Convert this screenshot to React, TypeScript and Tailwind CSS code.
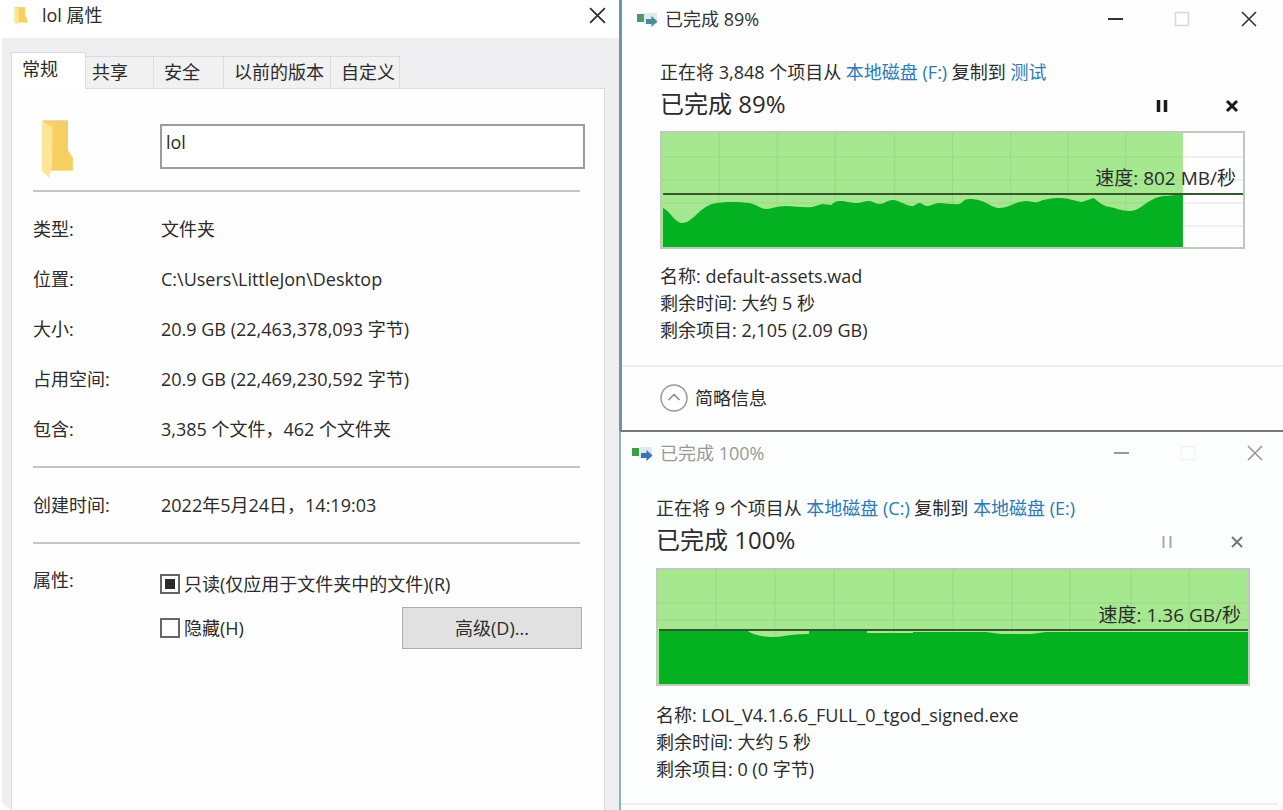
import { useEffect, useRef, type ReactNode } from 'react';

interface Property {
  label: string;
  value: string;
}

const tabs = [
  { label: '共享', className: 'w-[68px] pl-[6px]' },
  { label: '安全', className: 'w-[70px] pl-[10px]' },
  { label: '以前的版本', className: 'w-[107px] pl-[10px]' },
  { label: '自定义', className: 'w-[69px] pl-[10px]' },
];

const properties: Property[] = [
  { label: '类型:', value: '文件夹' },
  { label: '位置:', value: 'C:\\Users\\LittleJon\\Desktop' },
  { label: '大小:', value: '20.9 GB (22,463,378,093 字节)' },
  { label: '占用空间:', value: '20.9 GB (22,469,230,592 字节)' },
  { label: '包含:', value: '3,385 个文件，462 个文件夹' },
];

function FolderIcon({ className }: { className: string }) {
  return (
    <svg className={className} viewBox="0 0 34 58" preserveAspectRatio="none" aria-hidden="true">
      <path d="M2 1h25v29l5 7v13H10z" fill="#f8d568" />
      <path d="M14 2h13v29l4 7v11H11z" fill="#f6cf62" />
      <path d="M1 1l10 6v39l-3 11-7-7z" fill="#fde69a" />
      <path d="M2 1h25" stroke="#e6cf85" strokeWidth="1.5" />
    </svg>
  );
}

function CopyIcon({ active }: { active: boolean }) {
  return (
    <svg className="h-[18px] w-[22px]" viewBox="0 0 22 18" aria-hidden="true">
      <path d="M8 3h13v11H8z" fill="#dfe9f0" />
      <path d="M1 4h7v8H1z" fill={active ? '#4b9a68' : '#3f9b45'} />
      <path
        d="M10 9h5.500V6l6 5.500-6 5.500v-3H10z"
        fill={active ? '#4c8c93' : '#3d72b8'}
      />
    </svg>
  );
}

function CloseIcon({ className }: { className: string }) {
  return (
    <svg className={className} viewBox="0 0 16 16" aria-hidden="true">
      <path d="M1 1l14 14M15 1L1 15" stroke="currentColor" strokeWidth="1.6" fill="none" />
    </svg>
  );
}

function PropertyRow({ label, value }: Property) {
  return (
    <div className="flex h-[50px] items-center">
      <dt className="w-[128px]">{label}</dt>
      <dd>{value}</dd>
    </div>
  );
}

function Divider() {
  return <hr className="mr-[5px] border-t-2 border-[#c4c4c4]" />;
}

const checkboxClass =
  'flex h-5 w-5 shrink-0 appearance-none items-center justify-center border-2 border-[#666] bg-white indeterminate:before:h-[10px] indeterminate:before:w-[10px] indeterminate:before:bg-[#2a2a2a]';

function PropertiesWindow() {
  const readOnlyRef = useRef<HTMLInputElement>(null);

  useEffect(() => {
    if (readOnlyRef.current) readOnlyRef.current.indeterminate = true;
  }, []);

  return (
    <section className="flex min-w-0 flex-col border-l-2 border-white bg-[#efeff1]">
      <header className="flex h-[38px] items-start justify-between bg-white pr-[13px] pl-3">
        <div className="flex h-[31px] items-center">
          <FolderIcon className="h-[18px] w-[14px]" />
          <h1 className="ml-[14px]">lol 属性</h1>
        </div>
        <button aria-label="关闭" className="flex h-[30px] items-center">
          <CloseIcon className="h-[17px] w-[17px]" />
        </button>
      </header>

      <div className="flex flex-1 flex-col pt-[14px] pr-[14px] pl-[9px]">
        <div role="tablist" className="-mb-px flex items-end">
          <button
            role="tab"
            aria-selected="true"
            className="z-10 h-[37px] w-[75px] border border-b-0 border-[#dcdcdc] bg-white pb-[3px] pl-[10px] text-left"
          >
            常规
          </button>
          {tabs.map((tab) => (
            <button
              key={tab.label}
              role="tab"
              aria-selected="false"
              className={`h-[33px] border border-l-0 border-[#dcdcdc] bg-[#f1f1f1] text-left whitespace-nowrap ${tab.className}`}
            >
              {tab.label}
            </button>
          ))}
        </div>

        <div className="flex-1 border border-b-0 border-[#dcdcdc] bg-[#fefefe] pr-[19px] pl-[21px]">
          <div className="flex pt-[31px] pb-[11px]">
            <div className="w-[127px] pl-2">
              <FolderIcon className="h-[59px] w-[34px]" />
            </div>
            <input
              aria-label="名称"
              defaultValue="lol"
              className="mt-[4px] h-[45px] min-w-0 flex-1 border-2 border-[#9c9c9c] bg-white pb-[10px] pl-[4px]"
            />
          </div>
          <Divider />
          <dl className="py-3">
            {properties.map((property) => (
              <PropertyRow key={property.label} {...property} />
            ))}
          </dl>
          <Divider />
          <dl className="py-3">
            <PropertyRow label="创建时间:" value="2022年5月24日，14:19:03" />
          </dl>
          <Divider />
          <div className="flex pt-5">
            <div className="w-[127px] leading-8">属性:</div>
            <div className="flex-1">
              <label className="flex h-10 items-center gap-1">
                <input ref={readOnlyRef} type="checkbox" className={checkboxClass} />
                只读(仅应用于文件夹中的文件)(R)
              </label>
              <div className="flex items-center justify-between pt-[3px] pr-[3px]">
                <label className="flex items-center gap-1">
                  <input type="checkbox" className={checkboxClass} />
                  隐藏(H)
                </label>
                <button className="h-[42px] w-[180px] border border-[#adadad] bg-[#e1e1e1]">
                  高级(D)...
                </button>
              </div>
            </div>
          </div>
        </div>
      </div>
    </section>
  );
}

interface SpeedChartProps {
  width: number;
  height: number;
  progress: number;
  columns: number[];
  rows: number[];
  area: string;
  speedLine: number;
  speed: string;
}

function SpeedChart({ width, height, progress, columns, rows, area, speedLine, speed }: SpeedChartProps) {
  return (
    <div className="relative">
      <svg
        className="block h-[118px] w-full"
        viewBox={`0 0 ${width} ${height}`}
        preserveAspectRatio="none"
        role="img"
        aria-label={`速度: ${speed}`}
      >
        <rect width={width} height={height} fill="#fefefe" />
        {rows.map((y) => (
          <path key={y} d={`M0 ${y}H${width}`} stroke="#e2e2e2" />
        ))}
        <rect width={progress} height={height} fill="#a5e890" />
        {rows.map((y) => (
          <path key={y} d={`M0 ${y}H${progress}`} stroke="#97d984" />
        ))}
        {columns.map((x) => (
          <path key={x} d={`M${x} 0V${height}`} stroke="#97d984" />
        ))}
        <path d={area} fill="#04b121" />
        <path d={`M3 ${speedLine}H${width - 2}`} stroke="#34592c" strokeWidth="2" />
        <rect x="1" y="1" width={width - 2} height={height - 2} fill="none" stroke="#bfcabd" strokeWidth="2" />
      </svg>
      <span className="absolute top-[35px] right-[9px] text-[19px] leading-6">速度: {speed}</span>
    </div>
  );
}

interface CopyWindowProps {
  title: string;
  active: boolean;
  className: string;
  summary: ReactNode;
  chart: ReactNode;
  details: string[];
  footer?: ReactNode;
}

function CopyWindow({ title, active, className, summary, chart, details, footer }: CopyWindowProps) {
  return (
    <section className={`flex flex-col ${className}`}>
      <header className={`flex h-9 items-center ${active ? 'text-[#333]' : 'text-[#999]'}`}>
        <CopyIcon active={active} />
        <h2 className="ml-[7px] flex-1">{title}</h2>
        <div className="flex items-center gap-[51px]">
          <button aria-label="最小化" className="h-4 w-4">
            <svg viewBox="0 0 16 16" aria-hidden="true">
              <path d="M1 8h15" stroke="currentColor" strokeWidth="2" />
            </svg>
          </button>
          <button aria-label="最大化" disabled className={active ? 'h-4 w-4 text-[#d8d8d8]' : 'h-4 w-4 text-[#f3f3f3]'}>
            <svg viewBox="0 0 16 16" fill="none" aria-hidden="true">
              <path d="M1.500 1.500h13v13h-13z" stroke="currentColor" strokeWidth="1.5" />
            </svg>
          </button>
          <button aria-label="关闭" className="h-4 w-4">
            <CloseIcon className="h-4 w-4" />
          </button>
        </div>
      </header>

      <div className={active ? 'pt-[22px] pr-[12px] pl-[24px]' : 'pt-6 pr-[13px] pl-[25px]'}>
        <p className="leading-[26px] whitespace-nowrap">{summary}</p>
        <div className="flex h-[38px] items-center justify-between">
          <h3 className="text-2xl leading-[38px]">{title}</h3>
          <div className={`flex items-center gap-[56px] pt-1 pr-[6px] ${active ? 'text-[#1a1a1a]' : 'text-[#aaa]'}`}>
            <button aria-label="暂停" className="h-[14px] w-[14px]">
              <svg viewBox="0 0 14 14" aria-hidden="true">
                <path
                  d="M3.500 1v12M10.500 1v12"
                  stroke="currentColor"
                  strokeWidth={active ? 3.5 : 2}
                />
              </svg>
            </button>
            <button aria-label="取消" className="h-[14px] w-[14px]">
              <svg viewBox="0 0 14 14" aria-hidden="true">
                <path
                  d="M2 2l10 10M12 2L2 12"
                  stroke={active ? 'currentColor' : '#777'}
                  strokeWidth={active ? 3 : 2}
                />
              </svg>
            </button>
          </div>
        </div>
        <div className={active ? 'pt-2 pb-[14px]' : 'pt-[9px] pb-4'}>{chart}</div>
        <div className="leading-[27px]">
          {details.map((detail) => (
            <p key={detail}>{detail}</p>
          ))}
        </div>
      </div>
      {footer}
    </section>
  );
}

function Place({ children }: { children: ReactNode }) {
  return (
    <a href="#" className="text-[#2a7ab8]">
      {children}
    </a>
  );
}

export default function App() {
  return (
    <main className="grid min-h-screen grid-cols-[619fr_664fr] overflow-hidden rounded-bl-2xl bg-white font-['Open_Sans','Noto_Sans_CJK_SC',sans-serif] text-[18px] text-[#2b2b2b]">
      <PropertiesWindow />

      <div className="flex min-w-0 flex-col">
        <CopyWindow
          title="已完成 89%"
          active
          className="h-[430px] border-l-[3px] border-[#6a96a8] bg-[#fefefe] pt-px pr-[26px] pl-[14px]"
          summary={
            <>
              正在将 3,848 个项目从 <Place>本地磁盘 (F:)</Place> 复制到 <Place>测试</Place>
            </>
          }
          chart={
            <SpeedChart
              width={584}
              height={118}
              progress={522}
              columns={[59, 117, 175, 234, 292, 350, 407, 465]}
              rows={[26, 49, 72, 95]}
              area="M3 77C10 80 15 92 22 92C32 92 38 78 52 73C64 70 80 71 89 72C96 73 100 78 106 78C112 78 116 75 125 75C135 75 144 77 152 76L162 73L171 74C174 71 176 70 179 70C186 70 190 72 196 72C201 72 204 70 209 70C213 70 214 73 219 73C224 73 227 69 232 69C240 69 244 75 252 75C255 75 256 72 259 72C262 72 263 75 267 75C271 75 274 72 279 72C286 72 293 74 299 73C303 71 303 68 309 68C325 68 330 77 339 77C348 77 356 70 366 70C371 70 373 72 377 71C385 68 390 67 399 67C408 67 414 70 421 71L433 67C438 71 442 75 449 76C456 77 460 80 469 80C477 80 482 74 489 70C496 66 500 65 506 65L522 63V116H3Z"
              speedLine={63}
              speed="802 MB/秒"
            />
          }
          details={['名称: default-assets.wad', '剩余时间: 大约 5 秒', '剩余项目: 2,105 (2.09 GB)']}
          footer={
            <div className="-mr-[26px] -ml-[14px] mt-[21px] border-t-2 border-[#ededed] pt-[17px] pl-[38px]">
              <button className="flex items-center gap-[7px]">
                <svg className="h-7 w-7" viewBox="0 0 28 28" fill="none" aria-hidden="true">
                  <circle cx="14" cy="14" r="13" stroke="#9a9a9a" strokeWidth="1.5" />
                  <path d="M8.500 16l5.500-5.500 5.500 5.500" stroke="#888" strokeWidth="1.5" />
                </svg>
                简略信息
              </button>
            </div>
          }
        />
        <CopyWindow
          title="已完成 100%"
          active={false}
          className="flex-1 border-t-2 border-l-2 border-t-[#777] border-l-[#8cb4bf] bg-[#fcfdfd] pt-[3px] pr-[20px] pl-[10px]"
          summary={
            <>
              正在将 9 个项目从 <Place>本地磁盘 (C:)</Place> 复制到 <Place>本地磁盘 (E:)</Place>
            </>
          }
          chart={
            <SpeedChart
              width={594}
              height={118}
              progress={594}
              columns={[60, 119, 178, 238, 297, 356, 414, 475, 533]}
              rows={[35, 52]}
              area="M3 62H90C98 67 105 69 118 69C128 69 132 66 153 66V63H211V65H257V64H330L345 66H375L390 64H592V116H3Z"
              speedLine={62}
              speed="1.36 GB/秒"
            />
          }
          details={['名称: LOL_V4.1.6.6_FULL_0_tgod_signed.exe', '剩余时间: 大约 5 秒', '剩余项目: 0 (0 字节)']}
          footer={<hr className="-mr-[15px] -ml-[10px] mt-[20px] border-t-2 border-[#ededed]" />}
        />
      </div>
    </main>
  );
}
